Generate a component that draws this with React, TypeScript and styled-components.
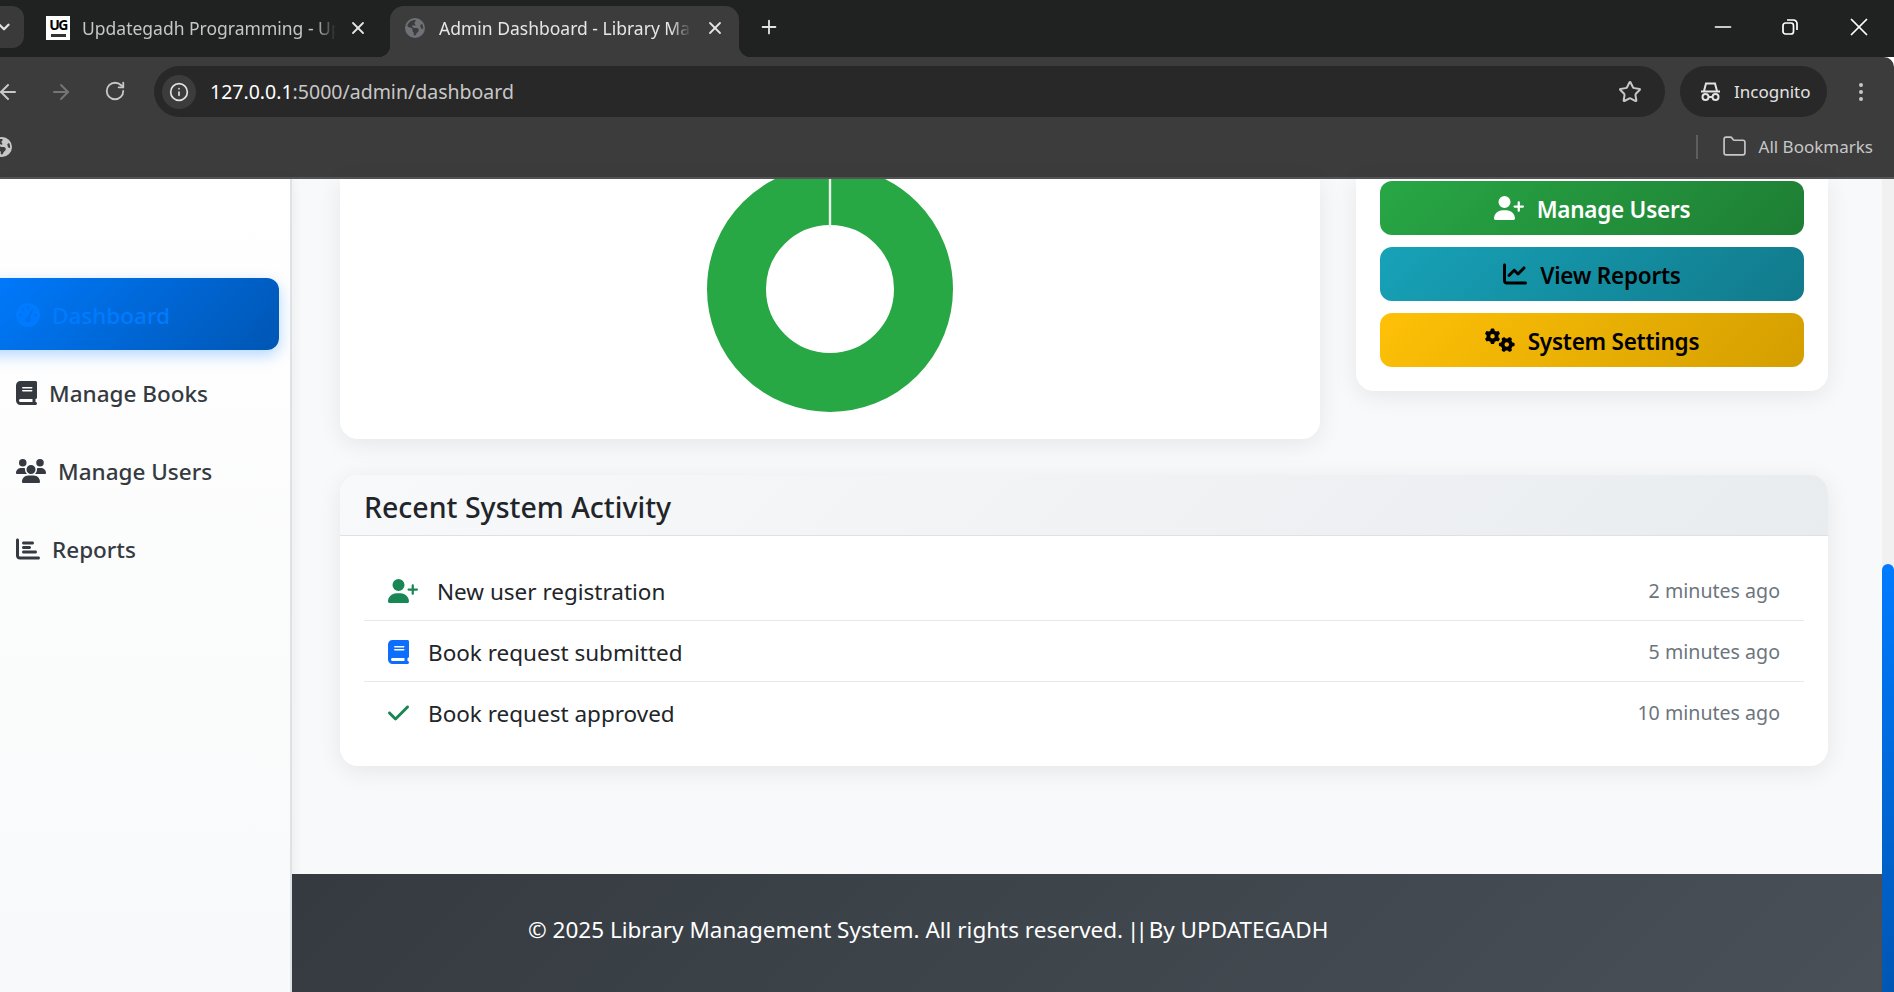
import styled, { createGlobalStyle } from 'styled-components'
import { ArrowLeft, ArrowRight, ChevronDown, EllipsisVertical, Folder, Info, Minus, Plus, RotateCw, Star, X } from 'lucide-react'
import {
  FaBook,
  FaChartBar,
  FaChartLine,
  FaCheck,
  FaEarthAmericas,
  FaGaugeHigh,
  FaGears,
  FaUserPlus,
  FaUsers,
} from 'react-icons/fa6'

const FONT = `"Noto Sans", "Open Sans", sans-serif`

const GlobalStyle = createGlobalStyle`
  html, body {
    margin: 0;
    height: 100%;
    overflow: hidden;
    font-family: ${FONT};
  }
  * {
    box-sizing: border-box;
  }
`

const Root = styled.div`
  width: 1894px;
  height: 992px;
  display: flex;
  flex-direction: column;
  overflow: hidden;
`

/* browser chrome */
const TabStrip = styled.div`
  height: 57px;
  background: #202221;
  display: flex;
  align-items: flex-end;
  flex: none;
`
const TabSearch = styled.div`
  width: 24px;
  height: 42px;
  margin-bottom: 9px;
  background: #3a3a3a;
  border-radius: 0 12px 12px 0;
  color: #e3e3e3;
  display: flex;
  align-items: center;
`
const Tab = styled.div<{ $active?: boolean }>`
  position: relative;
  width: ${(p) => (p.$active ? '349px' : '366px')};
  height: 51px;
  padding: ${(p) => (p.$active ? '0 14px 8px 15px' : '0 22px 8px 22px')};
  display: flex;
  align-items: center;
  background: ${(p) => (p.$active ? '#3c3c3c' : 'transparent')};
  border-radius: 14px 14px 0 0;
  color: ${(p) => (p.$active ? '#e6e6e6' : '#c4c7c5')};
  font-size: 17.5px;
  ${(p) =>
    p.$active &&
    `
    &::before, &::after {
      content: '';
      position: absolute;
      bottom: 0;
      width: 12px;
      height: 12px;
    }
    &::before {
      left: -12px;
      background: radial-gradient(circle at 0 0, transparent 12px, #3c3c3c 12.5px);
    }
    &::after {
      right: -12px;
      background: radial-gradient(circle at 100% 0, transparent 12px, #3c3c3c 12.5px);
    }
  `}
`
const Favicon = styled.div`
  width: 24px;
  height: 24px;
  flex: none;
  background: #fff;
  color: #000;
  font-size: 14px;
  font-weight: 700;
  letter-spacing: -1.5px;
  line-height: 18px;
  text-align: center;
  display: flex;
  flex-direction: column;
  align-items: center;
  &::after {
    content: '';
    width: 15px;
    height: 3px;
    background: #333;
  }
`
const TabGlobe = styled(FaEarthAmericas)`
  width: 20px;
  height: 20px;
  flex: none;
  color: #6e7175;
`
const TabTitle = styled.span<{ $width: number; $gap: number }>`
  width: ${(p) => p.$width}px;
  margin-left: ${(p) => p.$gap}px;
  overflow: hidden;
  white-space: nowrap;
  -webkit-mask-image: linear-gradient(90deg, #000 92%, transparent);
  mask-image: linear-gradient(90deg, #000 92%, transparent);
`
const TabClose = styled(X)`
  margin-left: auto;
  width: 20px;
  height: 20px;
  flex: none;
  stroke-width: 2.2;
  color: #e3e3e3;
`
const NewTab = styled(Plus)`
  margin: 0 0 19px 19px;
  width: 22px;
  height: 22px;
  color: #e3e3e3;
`
const WindowButtons = styled.div`
  margin-left: auto;
  align-self: stretch;
  display: flex;
  align-items: center;
  gap: 46px;
  padding: 0 20px 4px 0;
  color: #fff;
`
const ChromeBody = styled.div`
  flex: none;
  height: 122px;
  background: #3c3c3c;
  border-radius: 0 10px 0 0;
  border-bottom: 2px solid #555;
  display: flex;
  flex-direction: column;
`
const Toolbar = styled.div`
  height: 60px;
  display: flex;
  align-items: flex-end;
  flex: none;
`
const NavButton = styled.div<{ $dim?: boolean; $offset: number }>`
  width: 24px;
  height: 24px;
  margin: 0 0 13px ${(p) => p.$offset}px;
  flex: none;
  color: ${(p) => (p.$dim ? '#757575' : '#c7c7c7')};
`
const Omnibox = styled.div`
  width: 1511px;
  height: 51px;
  margin-left: 26px;
  flex: none;
  background: #282828;
  border-radius: 26px;
  display: flex;
  align-items: center;
  padding: 0 23px 0 8px;
  color: #e3e3e3;
  font-size: 19.5px;
`
const InfoBadge = styled.div`
  width: 34px;
  height: 34px;
  border-radius: 50%;
  background: #3c3c3c;
  display: flex;
  align-items: center;
  justify-content: center;
  color: #e3e3e3;
  margin-right: 14px;
`
const UrlHost = styled.span`
  color: #fff;
`
const UrlPath = styled.span`
  color: #c7c7c7;
`
const BookmarkStar = styled(Star)`
  margin-left: auto;
  width: 24px;
  height: 24px;
  color: #c7c7c7;
`
const IncognitoPill = styled.div`
  width: 147px;
  height: 51px;
  margin-left: 15px;
  flex: none;
  background: #282828;
  border-radius: 26px;
  display: flex;
  align-items: center;
  gap: 13px;
  padding-left: 20px;
  color: #e3e3e3;
  font-size: 17px;
`
const MenuDots = styled(EllipsisVertical)`
  margin: 0 0 13px 22px;
  width: 24px;
  height: 24px;
  color: #c7c7c7;
`
const BookmarksBar = styled.div`
  flex: 1;
  display: flex;
  align-items: center;
  padding-bottom: 1px;
  color: #c7c7c7;
  font-size: 17px;
`
const BookmarkGlobe = styled(FaEarthAmericas)`
  width: 20px;
  height: 20px;
  margin-left: -8px;
  color: #c7c7c7;
`
const Separator = styled.div`
  width: 2px;
  height: 24px;
  margin-left: auto;
  background: #5e5e5e;
`
const FolderIcon = styled(Folder)`
  width: 25px;
  height: 25px;
  margin: 0 12px 0 24px;
  stroke-width: 1.6;
`
const BookmarksLabel = styled.span`
  margin-right: 21px;
`

/* page */
const Viewport = styled.div`
  flex: 1;
  min-height: 0;
  display: flex;
  background: #f8f9fa;
`
const Sidebar = styled.aside`
  width: 292px;
  flex: none;
  padding: 99px 11px 0 0;
  background: linear-gradient(180deg, #fff, #f8f9fa);
  border-right: 2px solid #dee2e6;
  box-shadow: 2px 0 10px rgba(0, 0, 0, 0.05);
  overflow: hidden;
  display: flex;
  flex-direction: column;
  gap: 6px;
`
const NavItem = styled.div<{ $active?: boolean; $icon: number }>`
  height: 72px;
  margin-left: -20px;
  padding: 2px 0 0 36px;
  display: flex;
  align-items: center;
  gap: 12px;
  border-radius: 12px;
  font-size: 22.5px;
  font-weight: 500;
  color: ${(p) => (p.$active ? '#007bff' : '#343a40')};
  background: ${(p) => (p.$active ? 'linear-gradient(135deg, #007bff, #0056b3)' : 'transparent')};
  box-shadow: ${(p) => (p.$active ? '0 5px 15px rgba(0, 123, 255, 0.3)' : 'none')};
  svg {
    flex: none;
    width: ${(p) => p.$icon}px;
    height: 24px;
  }
`
const MainColumn = styled.main`
  flex: 1;
  min-width: 0;
  display: flex;
  flex-direction: column;
`
const Content = styled.div`
  flex: 1;
  padding: 0 54px 0 48px;
`
const TopRow = styled.div`
  display: grid;
  grid-template-columns: 980px 472px;
  gap: 36px;
  align-items: start;
  margin-bottom: 36px;
`
const ChartCard = styled.section`
  height: 260px;
  background: #fff;
  border-radius: 0 0 18px 18px;
  box-shadow: 0 5px 25px rgba(0, 0, 0, 0.08);
  display: flex;
  justify-content: center;
  align-items: flex-start;
`
const ActionsCard = styled.section`
  background: #fff;
  border-radius: 0 0 18px 18px;
  box-shadow: 0 5px 25px rgba(0, 0, 0, 0.08);
  padding: 2px 24px 24px;
  display: flex;
  flex-direction: column;
  gap: 12px;
`
const ActionButton = styled.div<{ $from: string; $to: string; $color: string; $icon: number }>`
  height: 54px;
  padding-top: 3px;
  border-radius: 12px;
  background: linear-gradient(135deg, ${(p) => p.$from}, ${(p) => p.$to});
  color: ${(p) => p.$color};
  display: flex;
  align-items: center;
  justify-content: center;
  gap: 13px;
  font-size: 22.5px;
  font-weight: 600;
  letter-spacing: -0.25px;
  svg {
    width: ${(p) => p.$icon}px;
    height: 24px;
    flex: none;
    margin-top: -3px;
  }
`
const ActivityCard = styled.section`
  background: #fff;
  border-radius: 18px;
  box-shadow: 0 5px 25px rgba(0, 0, 0, 0.08);
  overflow: hidden;
`
const ActivityHeader = styled.header`
  height: 61px;
  padding: 3px 24px 0 24px;
  display: flex;
  align-items: center;
  background: linear-gradient(135deg, #f8f9fa, #e9ecef);
  border-bottom: 1px solid #dee2e6;
`
const ActivityTitle = styled.h5`
  margin: 0;
  font-size: 28.5px;
  font-weight: 500;
  color: #212529;
`
const ActivityList = styled.div`
  padding: 24px;
`
const ActivityRow = styled.div`
  height: 61px;
  padding: 2px 24px 0;
  display: flex;
  align-items: center;
  border-bottom: 1px solid #e6e8ea;
  color: #212529;
  font-size: 22.5px;
  &:last-child {
    height: 60px;
    border-bottom: 0;
  }
`
const ActivityIcon = styled.span<{ $color: string; $width: number }>`
  display: flex;
  color: ${(p) => p.$color};
  margin-right: 19px;
  svg {
    width: ${(p) => p.$width}px;
    height: 24px;
  }
`
const ActivityTime = styled.span`
  margin: -2px 0 0 auto;
  color: #6c757d;
  font-size: 19.6px;
`
const Footer = styled.footer`
  height: 118px;
  flex: none;
  padding: 0 0 8px 236px;
  display: flex;
  align-items: center;
  background: linear-gradient(135deg, #343a40, #495057);
  color: #fff;
  font-size: 22.5px;
  white-space: pre;
`
const FooterPipes = styled.span`
  letter-spacing: -4px;
  margin: 0 -1px 0 -2px;
`
const ScrollTrack = styled.div`
  width: 12px;
  flex: none;
  background: #f1f1f1;
  padding-top: 385px;
  display: flex;
`
const ScrollThumb = styled.div`
  flex: 1;
  border-radius: 6px 6px 0 0;
  background: linear-gradient(180deg, #007bff, #0056b3);
`

function Donut() {
  return (
    <svg width="248" height="234" viewBox="0 13 248 234">
      <circle cx="124" cy="123" r="93.5" fill="none" stroke="#28a745" strokeWidth="59" />
      <rect x="122.8" y="0" width="2.4" height="62" fill="#e9f5ec" />
    </svg>
  )
}

function RestoreIcon() {
  return (
    <svg width="16" height="16" viewBox="0 0 16 16" fill="none" stroke="currentColor" strokeWidth="1.7">
      <rect x="1" y="4" width="10.5" height="11" rx="2.5" />
      <path d="M5 1h6.5A3.5 3.5 0 0 1 15 4.5V11" />
    </svg>
  )
}

function IncognitoIcon() {
  return (
    <svg width="21" height="21" viewBox="0 0 21 21" fill="none" stroke="currentColor" strokeWidth="2">
      <path d="M1 10.5h19M4 10l2-7.5h9l2 7.5" />
      <circle cx="5.5" cy="16" r="3" />
      <circle cx="15.5" cy="16" r="3" />
      <path d="M8.5 16h4" />
    </svg>
  )
}

export default function App() {
  return (
    <Root>
      <GlobalStyle />
      <TabStrip>
        <TabSearch>
          <ChevronDown size={18} strokeWidth={3} style={{ marginLeft: -5 }} />
        </TabSearch>
        <Tab>
          <Favicon>UG</Favicon>
          <TabTitle $width={254} $gap={12}>Updategadh Programming - Updategadh</TabTitle>
          <TabClose />
        </Tab>
        <Tab $active>
          <TabGlobe />
          <TabTitle $width={252} $gap={14}>Admin Dashboard - Library Management</TabTitle>
          <TabClose />
        </Tab>
        <NewTab />
        <WindowButtons>
          <Minus size={26} strokeWidth={1.5} />
          <RestoreIcon />
          <X size={30} strokeWidth={1.4} />
        </WindowButtons>
      </TabStrip>

      <ChromeBody>
        <Toolbar>
          <NavButton $offset={-4}>
            <ArrowLeft size={24} />
          </NavButton>
          <NavButton $dim $offset={29}>
            <ArrowRight size={24} />
          </NavButton>
          <NavButton $offset={31}>
            <RotateCw size={22} />
          </NavButton>
          <Omnibox>
            <InfoBadge>
              <Info size={20} />
            </InfoBadge>
            <UrlHost>127.0.0.1</UrlHost>
            <UrlPath>:5000/admin/dashboard</UrlPath>
            <BookmarkStar />
          </Omnibox>
          <IncognitoPill>
            <IncognitoIcon />
            Incognito
          </IncognitoPill>
          <MenuDots />
        </Toolbar>
        <BookmarksBar>
          <BookmarkGlobe />
          <Separator />
          <FolderIcon />
          <BookmarksLabel>All Bookmarks</BookmarksLabel>
        </BookmarksBar>
      </ChromeBody>

      <Viewport>
        <Sidebar>
          <NavItem $active $icon={24}>
            <FaGaugeHigh />
            Dashboard
          </NavItem>
          <NavItem $icon={21}>
            <FaBook />
            Manage Books
          </NavItem>
          <NavItem $icon={30}>
            <FaUsers />
            Manage Users
          </NavItem>
          <NavItem $icon={24}>
            <FaChartBar />
            Reports
          </NavItem>
        </Sidebar>

        <MainColumn>
          <Content>
            <TopRow>
              <ChartCard>
                <Donut />
              </ChartCard>
              <ActionsCard>
                <ActionButton $from="#28a745" $to="#1e7e34" $color="#fff" $icon={30}>
                  <FaUserPlus />
                  Manage Users
                </ActionButton>
                <ActionButton $from="#17a2b8" $to="#117a8b" $color="#000" $icon={24}>
                  <FaChartLine />
                  View Reports
                </ActionButton>
                <ActionButton $from="#ffc107" $to="#d39e00" $color="#000" $icon={30}>
                  <FaGears />
                  System Settings
                </ActionButton>
              </ActionsCard>
            </TopRow>

            <ActivityCard>
              <ActivityHeader>
                <ActivityTitle>Recent System Activity</ActivityTitle>
              </ActivityHeader>
              <ActivityList>
                <ActivityRow>
                  <ActivityIcon $color="#198754" $width={30}>
                    <FaUserPlus />
                  </ActivityIcon>
                  New user registration
                  <ActivityTime>2 minutes ago</ActivityTime>
                </ActivityRow>
                <ActivityRow>
                  <ActivityIcon $color="#0d6efd" $width={21}>
                    <FaBook />
                  </ActivityIcon>
                  Book request submitted
                  <ActivityTime>5 minutes ago</ActivityTime>
                </ActivityRow>
                <ActivityRow>
                  <ActivityIcon $color="#198754" $width={21}>
                    <FaCheck />
                  </ActivityIcon>
                  Book request approved
                  <ActivityTime>10 minutes ago</ActivityTime>
                </ActivityRow>
              </ActivityList>
            </ActivityCard>
          </Content>

          <Footer>
            © 2025 Library Management System. All rights reserved. <FooterPipes>||</FooterPipes> By UPDATEGADH
          </Footer>
        </MainColumn>

        <ScrollTrack>
          <ScrollThumb />
        </ScrollTrack>
      </Viewport>
    </Root>
  )
}
